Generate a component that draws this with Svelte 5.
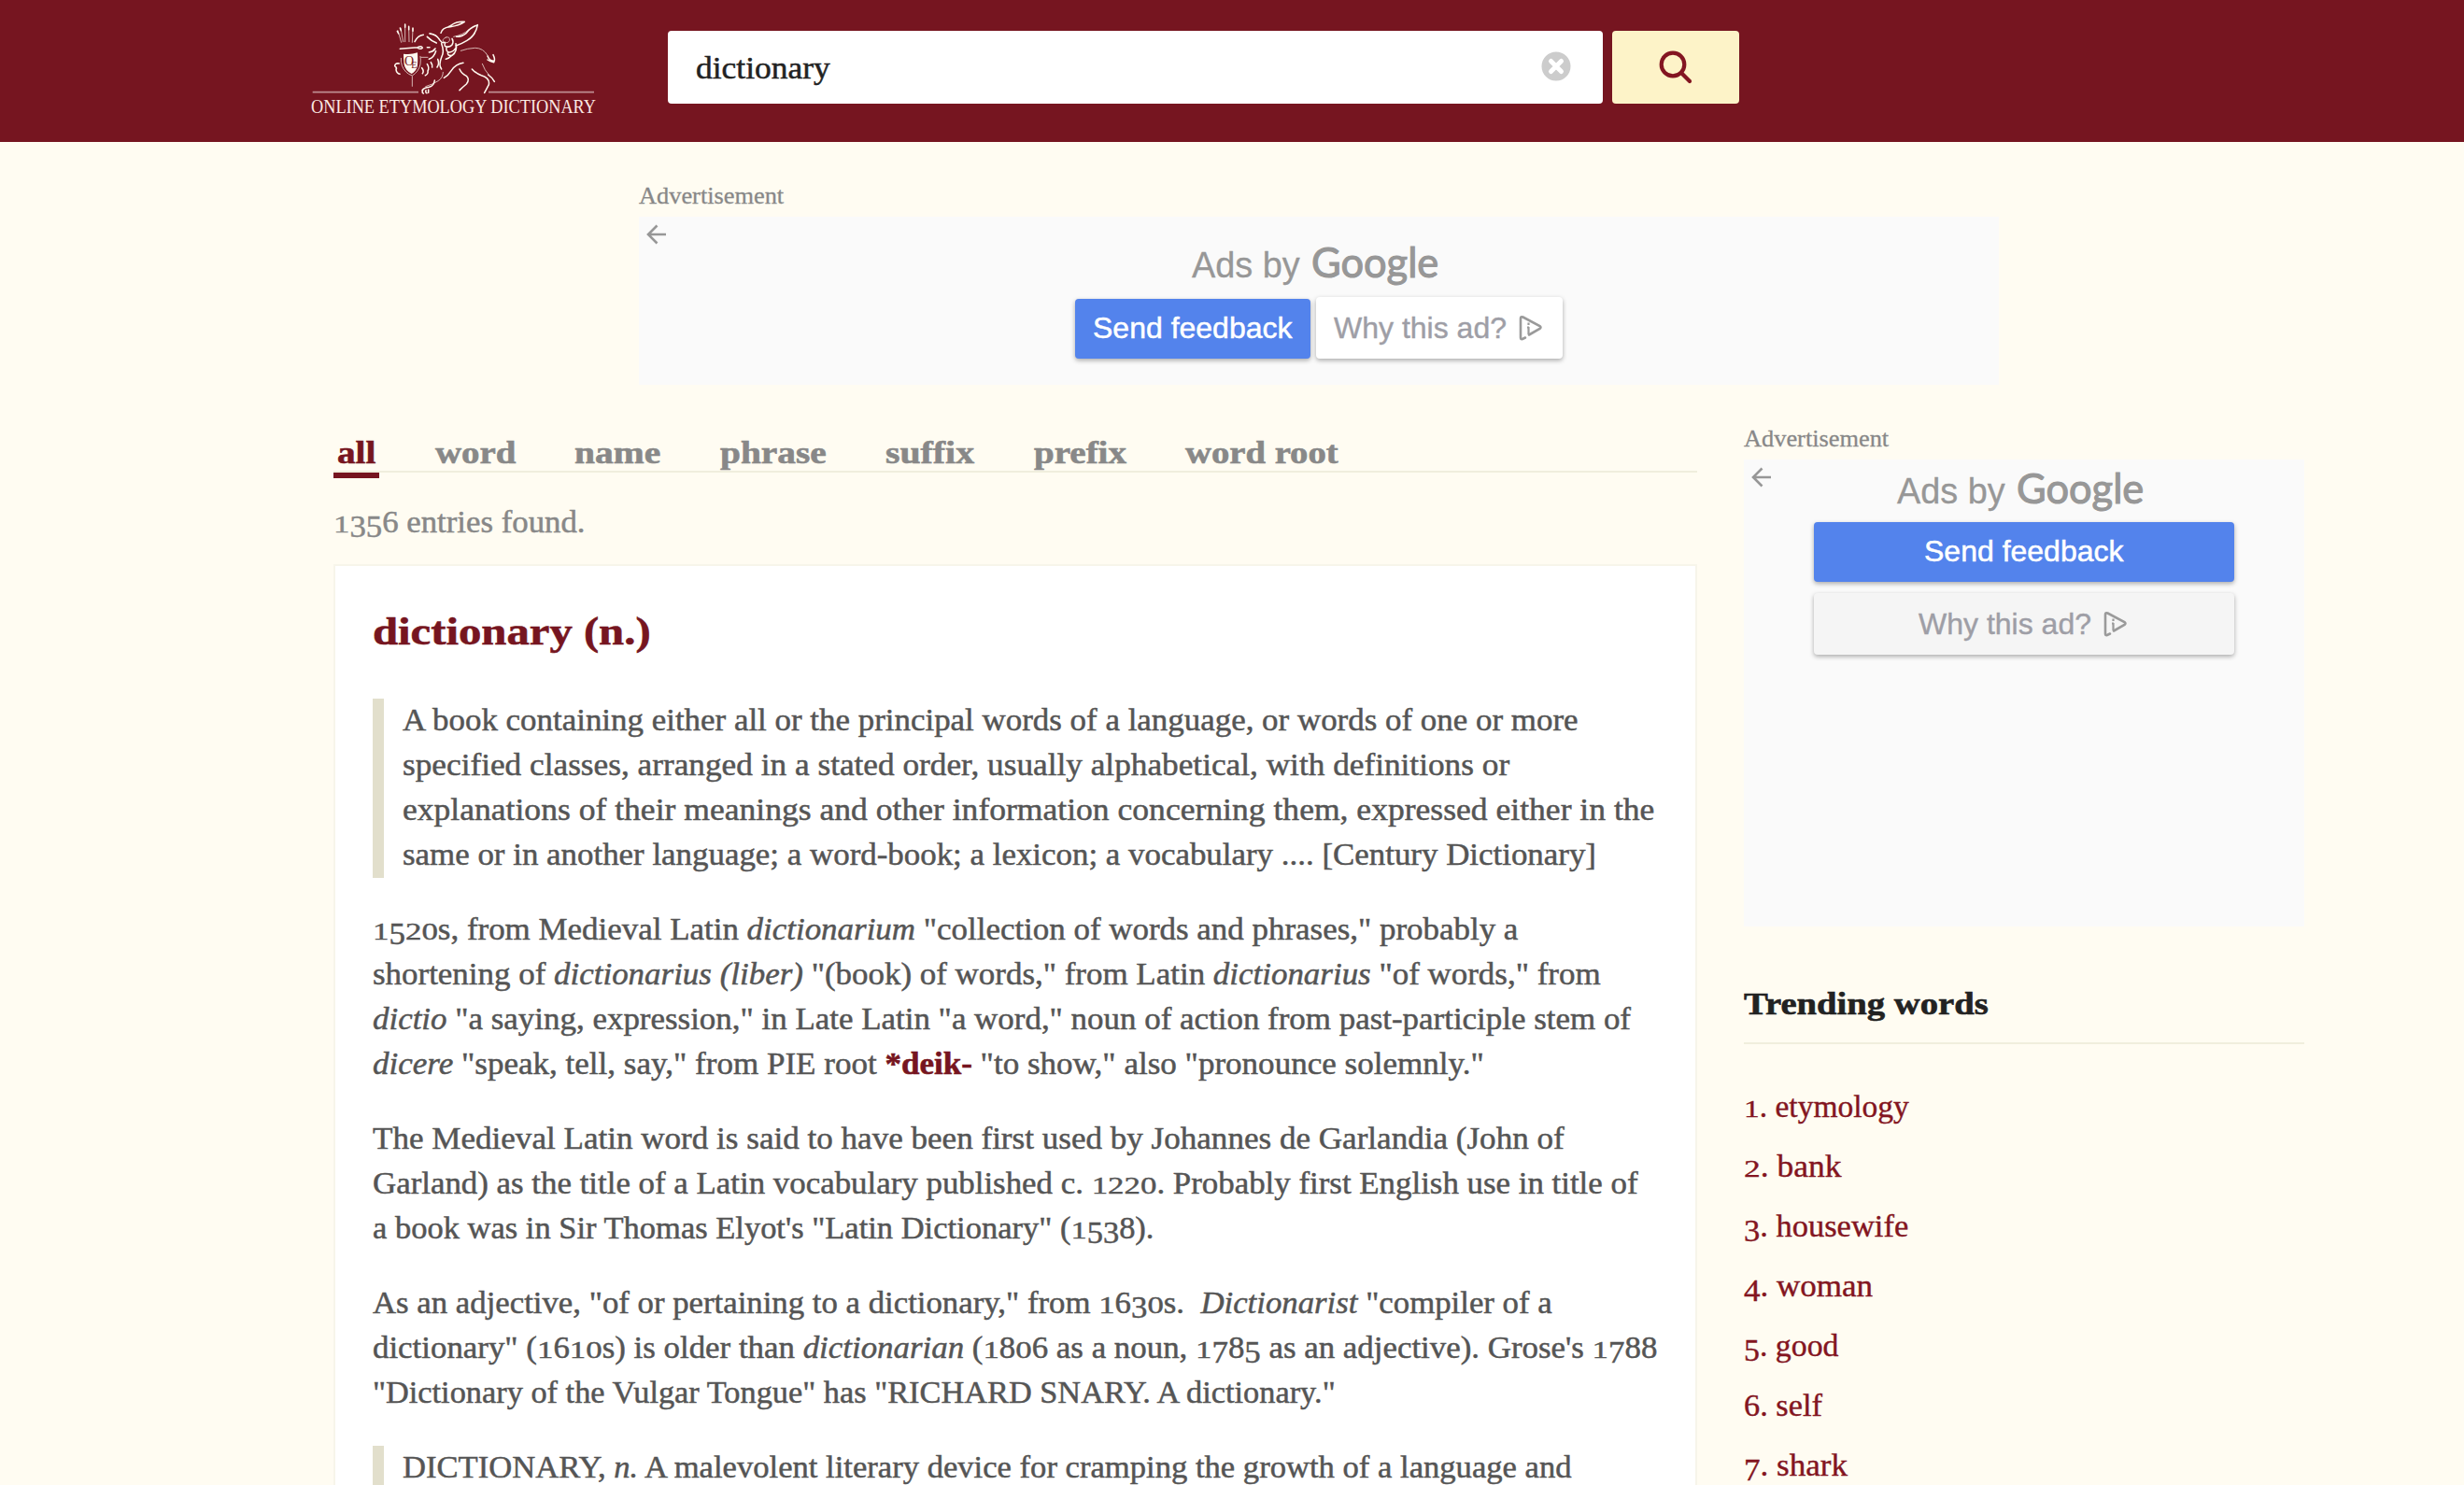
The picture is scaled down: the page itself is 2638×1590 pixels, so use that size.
<script>
  const tabs = [
    { label: 'all', width: 41, active: true },
    { label: 'word', width: 86 },
    { label: 'name', width: 92 },
    { label: 'phrase', width: 114 },
    { label: 'suffix', width: 95 },
    { label: 'prefix', width: 99 },
    { label: 'word root', width: 164 }
  ];

  const blocks = [
    {
      quote: true,
      lines: [
        ['A book containing either all or the principal words of a language, or words of one or more', 1259],
        ['specified classes, arranged in a stated order, usually alphabetical, with definitions or', 1185],
        ['explanations of their meanings and other information concerning them, expressed either in the', 1340],
        ['same or in another language; a word-book; a lexicon; a vocabulary .... [Century Dictionary]', 1278]
      ]
    },
    {
      lines: [
        ['1520s, from Medieval Latin <em>dictionarium</em> "collection of words and phrases," probably a', 1226],
        ['shortening of <em>dictionarius (liber)</em> "(book) of words," from Latin <em>dictionarius</em> "of words," from', 1315],
        ['<em>dictio</em> "a saying, expression," in Late Latin "a word," noun of action from past-participle stem of', 1347],
        ['<em>dicere</em> "speak, tell, say," from PIE root <b>*deik-</b> "to show," also "pronounce solemnly."', 1190]
      ]
    },
    {
      lines: [
        ['The Medieval Latin word is said to have been first used by Johannes de Garlandia (John of', 1276],
        ['Garland) as the title of a Latin vocabulary published c. 1220. Probably first English use in title of', 1355],
        ['a book was in Sir Thomas Elyot\'s "Latin Dictionary" (1538).', 836]
      ]
    },
    {
      lines: [
        ['As an adjective, "of or pertaining to a dictionary," from 1630s. &nbsp;<em>Dictionarist</em> "compiler of a', 1263],
        ['dictionary" (1610s) is older than <em>dictionarian</em> (1806 as a noun, 1785 as an adjective). Grose\'s 1788', 1375],
        ['"Dictionary of the Vulgar Tongue" has "RICHARD SNARY. A dictionary."', 1031]
      ]
    },
    {
      quote: true,
      lines: [['DICTIONARY, <em>n.</em> A malevolent literary device for cramping the growth of a language and', 1252]]
    }
  ];

  const trending = [
    ['etymology', 177],
    ['bank', 105],
    ['housewife', 176],
    ['woman', 138],
    ['good', 102],
    ['self', 84],
    ['shark', 111]
  ];

  // Old-style figures: 0-2 sit at x-height, 3-5, 7 and 9 hang below the baseline.
  const oldstyle = (s) =>
    s.replace(/[0-2]/g, '<i class="fig short">$&</i>').replace(/[34579]/g, '<i class="fig low">$&</i>');

  // Stretches a run of text horizontally to its measure.
  function fit(node, width) {
    node.style.transform = `scaleX(${width / node.offsetWidth})`;
  }
</script>

{#snippet run(text, width)}
  <span class="slot" style:width="{width}px"><span class="fit" use:fit={width}>{@html text}</span></span>
{/snippet}

{#snippet back()}
  <svg class="back" viewBox="0 0 22 22" width="22" height="22">
    <path d="M21 11H2M11.5 1.5L2 11l9.500 9.500" />
  </svg>
{/snippet}

{#snippet adTitle()}
  <div class="ad-title">
    {@render run('Ads by', 116)}
    <span class="google">{@render run('Google', 136)}</span>
  </div>
{/snippet}

{#snippet choices()}
  <svg class="choices" viewBox="0 0 26 28" width="26" height="28">
    <path d="M7 24.500l-3 1.500q-2 .5-2-1.500V4q0-2.500 2.500-1.500L22.500 12q2 1.500 0 3L11 21.500" />
    <path class="i" d="M10.500 13v8M9 13.500H11M10.500 8.500v2.500" />
  </svg>
{/snippet}

<div class="page">
  <header>
    <svg class="logo" viewBox="0 0 330 152" width="330" height="152">
      <g transform="scale(.33333)">
        <g class="rule"><path d="M44 296H384M609 296H948" /></g>
        <g class="thin">
          <path d="M318 98l11 38M327 90l8 44M341 80v54M353 88l1 46M366 92l-2 44" />
          <path d="M328 187q-2 26 16 44 8 8 20 12 20-12 26-36 2-16 0-26" />
          <path d="M364 245v32M392 184h22" />
          <path d="M520 163q22-8 46-9 26 0 40 24" />
          <path d="M589 205q8 22 20 34" />
          <path d="M463 232q0 18-16 28-14 10-40 18" />
          <path d="M420 107q22 2 34 24M497 118q30-6 48-22" />
          <path d="M472 120q14-4 12 10-4 10-18 6-10-8 6-16" />
        </g>
        <g class="mid">
          <path d="M316 100l4 8M325 90l3 8M341 78v10M353 85v10M366 90v10" />
          <path d="M325 157l56-5q14-6 16 2-6 6-15 0" />
          <path d="M456 106q4-18 30-20 28-4 46-16-24-2-38 8-8 6-14 8" />
          <path d="M574 80q-6 34-34 50-20 12-36 17M574 80q-26 10-36 26-14 12-32 12" />
          <path d="M372 134q10-20 28-22M420 108q22 2 32 20 8 12 14 8M412 118q14 14 30 20" />
          <path d="M470 136q-6 14 6 14 10 2 16-6 6-10 0-20M474 152q-2 16 10 16 14-2 22-18M478 170q0 10 12 8M504 140q6 26-12 38-10 10-20 12" />
          <path d="M458 140q10 26 0 44-10 26 0 38M440 164q-6 20-22 26M418 168q14-2 20-12M412 152l8 0" />
          <path d="M466 250q14-8 24-24 14-20 38-24" />
          <path d="M516 222q6 14 22 22 12 12 0 26-12 10-22 20" />
          <path d="M556 222q12 14 30 20 28 8 24 30-6 12-14 26M608 240q14 10 20 22" />
          <path d="M606 180q6 16 22 16M624 176q8 16 2 24-12-2-20-8" />
          <path d="M322 204q-14-2-14 8 8 6 4 12 2 12 12 14" />
          <path d="M395 218q8 10 2 18M412 206q8 12 2 22 2 10-8 14M424 200q6 8 4 16M446 190q6 14-2 26" />
          <path d="M436 258q-2 18-18 22-16 2-22 10M398 290q-4 8 2 10M408 290q-2 8 3 9M416 288v10" />
        </g>
        <path class="shield" d="M336 173q22 4 45-4 2 30-1 46-6 16-18 22-20-10-24-30-2-18-2-34z" />
        <text class="monogram" x="339" y="209">O</text>
        <text class="monogram small" x="361" y="219">E</text>
      </g>
      <text class="brand" x="13" y="120.700" textLength="305" lengthAdjust="spacingAndGlyphs">ONLINE ETYMOLOGY DICTIONARY</text>
    </svg>
    <div class="search">
      {@render run('dictionary', 144)}
      <svg class="clear" viewBox="0 0 32 32" width="32" height="32">
        <circle cx="16" cy="16" r="15.500" />
        <path d="M10.500 10.500l11 11M21.500 10.500l-11 11" />
      </svg>
    </div>
    <button class="go" aria-label="Search">
      <svg viewBox="0 0 36 36" width="36" height="36">
        <circle cx="15" cy="15" r="12.300" />
        <path d="M24 24l9 9" />
      </svg>
    </button>
  </header>

  <section class="top-ad">
    <p class="ad-label">{@render run('Advertisement', 155)}</p>
    <div class="ad wide">
      {@render back()}
      {@render adTitle()}
      <div class="ad-buttons">
        <div class="send">{@render run('Send feedback', 214)}</div>
        <div class="why">{@render run('Why this ad?', 185)}{@render choices()}</div>
      </div>
    </div>
  </section>

  <div class="columns">
    <main>
      <nav>
        {#each tabs as tab}
          <div class="tab" class:active={tab.active}>{@render run(tab.label, tab.width)}</div>
        {/each}
      </nav>
      <p class="count">{@render run(oldstyle('1356') + ' entries found.', 270)}</p>
      <article>
        <h1>{@render run('dictionary (n.)', 298)}</h1>
        {#each blocks as block}
          <div class="block" class:quote={block.quote}>
            {#each block.lines as [text, width]}
              <div class="line">{@render run(oldstyle(text), width)}</div>
            {/each}
          </div>
        {/each}
      </article>
    </main>

    <aside>
      <p class="ad-label">{@render run('Advertisement', 155)}</p>
      <div class="ad tall">
        {@render back()}
        {@render adTitle()}
        <div class="ad-buttons">
          <div class="send">{@render run('Send feedback', 214)}</div>
          <div class="why">{@render run('Why this ad?', 185)}{@render choices()}</div>
        </div>
      </div>
      <h2>{@render run('Trending words', 262)}</h2>
      <ul>
        {#each trending as [word, width], i}
          <li>{@render run(oldstyle(`${i + 1}`) + '. ' + word, width)}</li>
        {/each}
      </ul>
    </aside>
  </div>
</div>

<style>
  :global(body) {
    margin: 0;
    background: #fffcf2;
  }
  .page {
    width: 2638px;
    height: 1590px;
    overflow: hidden;
    background: #fffcf2;
    color: #555;
    font-family: Georgia, 'Liberation Serif', serif;
    font-size: 33.5px;
    -webkit-text-stroke: 0.5px currentColor;
  }
  p, h1, h2, ul {
    margin: 0;
    padding: 0;
  }
  .slot {
    display: inline-block;
    text-align: left;
    white-space: nowrap;
  }
  .fit {
    display: inline-block;
    transform-origin: 0 50%;
  }
  .fit :global(b) {
    color: #761520;
    -webkit-text-stroke: 0.6px #761520;
  }
  .fit :global(.fig) {
    display: inline-block;
    font-style: normal;
    line-height: 1;
  }
  .fit :global(.short) {
    transform: scaleY(0.74);
    transform-origin: 0 0.8375em;
  }
  .fit :global(.low) {
    transform: translateY(0.16em);
  }

  header {
    display: flex;
    align-items: flex-start;
    height: 152px;
    padding-left: 320px;
    box-sizing: border-box;
    background: #761520;
  }
  .logo {
    display: block;
    overflow: visible;
    fill: none;
    stroke: #fffaf0;
    stroke-linecap: round;
    stroke-linejoin: round;
  }
  .rule {
    stroke: #bd8d90;
    stroke-width: 5;
    stroke-linecap: butt;
  }
  .thin {
    stroke-width: 3;
    opacity: 0.7;
  }
  .mid {
    stroke-width: 4.6;
  }
  .shield {
    fill: #fffaf0;
    stroke: none;
  }
  .monogram {
    fill: #761520;
    stroke: none;
    font-size: 42px;
    font-family: 'Liberation Serif', serif;
  }
  .monogram.small {
    font-size: 30px;
  }
  .brand {
    fill: #fbe9e2;
    stroke: none;
    font-size: 20px;
    font-family: 'Liberation Serif', serif;
    -webkit-text-stroke: 0;
  }
  .search {
    display: flex;
    align-items: center;
    justify-content: space-between;
    width: 1001px;
    height: 78px;
    margin: 33px 0 0 65px;
    padding: 0 34px 0 30px;
    box-sizing: border-box;
    border-radius: 4px;
    background: #fff;
    color: #222;
    line-height: 77px;
  }
  .clear {
    margin-top: -3px;
    fill: #ccc;
  }
  .clear path {
    stroke: #fff;
    stroke-width: 5;
    stroke-linecap: round;
  }
  .go {
    display: flex;
    align-items: center;
    justify-content: center;
    width: 136px;
    height: 78px;
    margin: 33px 0 0 10px;
    padding: 0;
    border: 0;
    border-radius: 4px;
    background: #fdf3c8;
  }
  .go svg {
    fill: none;
    stroke: #831521;
    stroke-width: 4.2;
    stroke-linecap: round;
  }

  .top-ad {
    width: 1456px;
    padding: 42px 0 0 684px;
  }
  .ad-label {
    height: 38px;
    font-size: 25px;
    line-height: 32px;
    color: #888;
    -webkit-text-stroke: 0.3px #888;
  }
  .ad {
    position: relative;
    box-sizing: border-box;
    background: #fafafa;
    font-family: 'Liberation Sans', Arial, sans-serif;
    font-size: 32px;
    -webkit-text-stroke: 0;
  }
  .back {
    position: absolute;
    left: 8px;
    top: 8px;
    fill: none;
    stroke: #979797;
    stroke-width: 2.6;
  }
  .wide {
    height: 180px;
    padding-top: 21px;
  }
  .tall {
    height: 500px;
    padding-top: 3px;
  }
  .ad-title {
    display: flex;
    align-items: baseline;
    justify-content: center;
    gap: 12px;
    height: 60px;
    padding-right: 9px;
    color: #979797;
    font-size: 38.5px;
    line-height: 61px;
    -webkit-text-stroke: 0.3px #979797;
  }
  .google {
    font-family: Lato, sans-serif;
    font-size: 45px;
    -webkit-text-stroke: 1.1px #979797;
    line-height: 50px;
  }
  .ad-buttons {
    display: flex;
    justify-content: center;
  }
  .wide .ad-buttons {
    align-items: flex-end;
    gap: 6px;
    padding-top: 5px;
  }
  .tall .ad-buttons {
    flex-direction: column;
    align-items: center;
    gap: 12px;
    padding-top: 4px;
  }
  .send, .why {
    display: flex;
    align-items: center;
    justify-content: center;
    border-radius: 4px;
    box-shadow: 0 2px 5px rgba(0, 0, 0, 0.32);
  }
  .send {
    width: 252px;
    height: 62px;
    padding-bottom: 2px;
    background: #5383ec;
    color: #fff;
    line-height: 62px;
    -webkit-text-stroke: 0.5px #fff;
  }
  .why {
    gap: 13px;
    width: 262px;
    height: 66px;
    padding-right: 2px;
    background: #fff;
    color: #9e9ea6;
    line-height: 66px;
    -webkit-text-stroke: 0.4px #9e9ea6;
  }
  .tall .send {
    width: 450px;
  }
  .tall .why {
    width: 448px;
    background: #f5f5f5;
  }
  .choices {
    fill: none;
    stroke: #9a9a9a;
    stroke-width: 2.6;
    stroke-linecap: round;
  }
  .choices .i {
    stroke-width: 2.2;
    stroke-linecap: butt;
  }

  .columns {
    display: grid;
    grid-template-columns: 1460px 600px;
    gap: 50px;
    padding-left: 357px;
  }
  nav {
    display: flex;
    gap: 55.5px;
    height: 36px;
    padding-top: 56px;
    border-bottom: 2px solid #f0eedd;
    color: #888;
    font-weight: bold;
    line-height: 34px;
  }
  .tab {
    position: relative;
    height: 36px;
    padding: 0 4px;
    -webkit-text-stroke: 0.6px currentColor;
  }
  .active {
    color: #761520;
  }
  .active::after {
    content: '';
    position: absolute;
    left: 0;
    right: 0;
    bottom: -8px;
    height: 6px;
    background: #761520;
  }
  .count {
    height: 48px;
    margin: 28px 0 22px;
    line-height: 50px;
    color: #888;
    -webkit-text-stroke: 0.5px #888;
  }
  article {
    padding: 40px 40px 0;
    border: 2px solid #f7f5ea;
    background: #fff;
    -webkit-text-stroke: 0.5px #555;
  }
  h1 {
    height: 60px;
    margin-bottom: 42px;
    color: #761520;
    font-size: 42px;
    line-height: 60px;
    -webkit-text-stroke: 0.6px #761520;
  }
  .block {
    margin-bottom: 32px;
  }
  .quote {
    padding-left: 20px;
    border-left: 12px solid #e2dfcc;
  }
  .line {
    height: 48px;
    line-height: 46px;
  }

  aside {
    padding-top: 42px;
  }
  h2 {
    height: 40px;
    margin-top: 63px;
    padding-bottom: 21px;
    border-bottom: 2px solid #f0eedd;
    color: #222;
    font-size: 33.5px;
    line-height: 40px;
    -webkit-text-stroke: 0.6px #222;
  }
  ul {
    margin-top: 35px;
    list-style: none;
    color: #831521;
    -webkit-text-stroke: 0.4px #831521;
  }
  li {
    height: 64px;
    line-height: 64px;
  }
</style>
